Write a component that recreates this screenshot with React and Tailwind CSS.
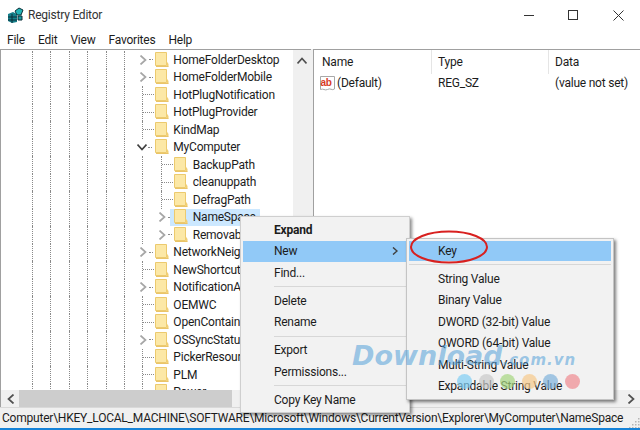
import React from "react";

const FONT = "[font-family:'Roboto','Noto_Sans',sans-serif]";

const TREE = [
  { name: "HomeFolderDesktop", arrow: true },
  { name: "HomeFolderMobile", arrow: true },
  { name: "HotPlugNotification" },
  { name: "HotPlugProvider" },
  { name: "KindMap" },
  { name: "MyComputer", open: true },
  { name: "BackupPath", level: 2 },
  { name: "cleanuppath", level: 2 },
  { name: "DefragPath", level: 2 },
  { name: "NameSpace", level: 2, arrow: true, selected: true },
  { name: "RemovableDrives", level: 2, arrow: true },
  { name: "NetworkNeighborhood", arrow: true },
  { name: "NewShortcutHandlers" },
  { name: "NotificationArea", arrow: true },
  { name: "OEMWC" },
  { name: "OpenContainers" },
  { name: "OSSyncStatus", arrow: true },
  { name: "PickerResources" },
  { name: "PLM" },
  { name: "Power" },
];

const MENU = [
  { label: "Expand", bold: true },
  { label: "New", active: true, sub: true },
  { label: "Find..." },
  null,
  { label: "Delete" },
  { label: "Rename" },
  null,
  { label: "Export" },
  { label: "Permissions..." },
  null,
  { label: "Copy Key Name" },
];

const SUBMENU = ["String Value", "Binary Value", "DWORD (32-bit) Value", "QWORD (64-bit) Value", "Multi-String Value", "Expandable String Value"];

const DOTS = ["bg-[#7fcdf3]", "bg-[#c9c9c9]", "bg-[#a5d67f]", "bg-[#f6c98a]", "bg-[#7fb2dc]", "bg-[#f08a90]"];

const Chevron = ({ dir = "right", color = "#a6a6a6", size = 10 }) => {
  const points = {
    right: "2.5,0.5 7.5,5 2.5,9.5",
    left: "7.5,0.5 2.5,5 7.5,9.5",
    up: "0.5,7.5 5,2.5 9.5,7.5",
    down: "0.5,2.5 5,7.5 9.5,2.5",
  }[dir];
  return (
    <svg width={size} height={size} viewBox="0 0 10 10" className="shrink-0">
      <polyline points={points} fill="none" stroke={color} strokeWidth="1.7" />
    </svg>
  );
};

const Folder = () => (
  <svg width="14" height="16" viewBox="0 0 14 16" className="shrink-0">
    <path d="M0.5 0.5H11.5V13.5H0.5Z" fill="#fce8a6" stroke="#ecca6e" />
    <path d="M11.5 9V14.5H13.5V12Z" fill="#f2cf74" />
    <path d="M1 14.5H13.5" stroke="#eac468" />
  </svg>
);

const RegIcon = () => (
  <svg width="17" height="17" viewBox="0 0 17 17" className="shrink-0">
    <path d="M1 7L6 5L10 7V15L5 16L1 14Z" fill="#157f8a" />
    <path d="M1 10L10 10M5 7V16M1 13L10 13" stroke="#0b2f38" strokeWidth="1" />
    <path d="M8 4L12 1L16 3L14 8L10 8Z" fill="#23b3b5" stroke="#0b2f38" />
    <path d="M11 9H15V13H11Z" fill="#1b9aa0" stroke="#0b2f38" />
  </svg>
);

const StringIcon = () => (
  <svg width="16" height="17" viewBox="0 0 16 17" className="shrink-0">
    <path d="M0.5 1.5H14.5V14C12 16 10 12.5 7.5 14.5C5 16 3 13 0.5 14.5Z" fill="#fff" stroke="#a8a8a8" />
    <text x="0.5" y="10.5" fontSize="10" fontWeight="700" fill="#d8391f" fontFamily="'Liberation Sans', sans-serif">ab</text>
  </svg>
);

const Grip = () => (
  <svg width="11" height="11" viewBox="0 0 11 11" className="shrink-0">
    <path d="M9 1h1.5v1.5H9zM6 4h1.5v1.5H6zM9 4h1.5v1.5H9zM3 7h1.5v1.5H3zM6 7h1.5v1.5H6zM9 7h1.5v1.5H9zM0 10h1.5v1H0zM3 10h1.5v1H3zM6 10h1.5v1H6zM9 10h1.5v1H9z" fill="#b5b5b5" />
  </svg>
);

const Guide = () => <span className="w-[18.4px] h-full shrink-0 border-l border-dotted border-[#8a8a8a]" />;

const TreeRow = ({ name, level = 1, arrow, open, selected }) => (
  <div className="h-[17.5px] shrink-0 flex items-center pl-[32px]">
    {[0, 1, 2, 3, 4, 5].map((i) => <Guide key={i} />)}
    {level === 2 && <Guide />}
    <span className={`h-full shrink-0 w-[13px] flex items-center ${arrow || open ? "" : "border-l border-dotted border-[#8a8a8a]"}`}>
      {open ? (
        <span className="-ml-[5px]"><Chevron dir="down" color="#404040" /></span>
      ) : arrow ? (
        <span className="-ml-[4px]"><Chevron /></span>
      ) : null}
      <span className={`border-t border-dotted border-[#8a8a8a] ${arrow || open ? "w-[4px] ml-[1px]" : "w-[11px]"}`} />
    </span>
    <span className={`h-full flex items-center ${selected ? "bg-[#cce8ff] -ml-[4px] pl-[4px] pr-[4px]" : ""}`}>
      <Folder />
      <span className={`${level === 2 ? "ml-[5px]" : "ml-[4px]"} whitespace-nowrap`}>{name}</span>
    </span>
  </div>
);

const MenuRow = ({ label, bold, active, sub }) => (
  <div className={`h-[21.5px] flex items-center justify-between pl-[31px] pr-[8px] ${active ? "bg-[#91c9f7]" : ""} ${bold ? "font-bold" : ""}`}>
    <span>{label}</span>
    {sub && <Chevron color="#404040" size={8} />}
  </div>
);

const Sep = () => (
  <div className="h-[6.5px] flex items-center pl-[31px]">
    <div className="h-px flex-1 bg-[#d7d7d7]" />
  </div>
);

export default function App() {
  return (
    <div className={`relative w-[640px] h-[430px] overflow-hidden bg-white text-[12px] leading-none tracking-[-0.22px] text-[#1c1c1c] flex flex-col ${FONT}`}>
      <div className="h-[30px] shrink-0 flex items-center pl-[7px]">
        <RegIcon />
        <span className="ml-[4px] text-[#333]">Registry Editor</span>
        <div className="ml-auto flex items-center">
          <span className="w-[10px] h-px bg-[#333] mr-[34px]" />
          <span className="w-[10px] h-[10px] border border-[#333] mr-[35px]" />
          <svg width="11" height="11" viewBox="0 0 11 11" className="mr-[16px]">
            <path d="M0.5 0.5L10.5 10.5M10.5 0.5L0.5 10.5" stroke="#333" />
          </svg>
        </div>
      </div>

      <div className="h-[19px] shrink-0 flex items-center gap-[13px] pl-[7px]">
        <span>File</span>
        <span>Edit</span>
        <span>View</span>
        <span>Favorites</span>
        <span>Help</span>
      </div>

      <div className="h-[358px] shrink-0 flex bg-[#f0f0f0]">
        <div className="w-[311px] shrink-0 flex flex-col bg-white border-l border-t border-[#a0a0a0]">
          <div className="flex-1 flex min-h-0">
            <div className="flex-1 pt-[1px] overflow-hidden flex flex-col -ml-px">
              {TREE.map((row) => <TreeRow key={row.name} {...row} />)}
            </div>
            <div className="w-[18px] shrink-0 bg-[#f0f0f0] flex justify-center pt-[6px]">
              <Chevron dir="up" color="#505050" />
            </div>
          </div>
          <div className="h-[17px] shrink-0 bg-[#f0f0f0] flex items-center pl-[5px]">
            <Chevron dir="left" color="#505050" />
            <div className="ml-[3px] w-[213px] h-full bg-[#cdcdcd]" />
          </div>
        </div>

        <div className="flex-1 ml-[2px] flex flex-col bg-white border-l border-t border-[#a0a0a0]">
          <div className="flex-1">
            <div className="h-[24px] flex items-center">
              <span className="w-[118px] pl-[8px] h-full flex items-center border-r border-[#e5e5e5]">Name</span>
              <span className="w-[117px] pl-[6px] h-full flex items-center border-r border-[#e5e5e5]">Type</span>
              <span className="pl-[6px]">Data</span>
            </div>
            <div className="h-[18px] flex items-center">
              <span className="w-[118px] pl-[6px] flex items-center gap-[1px]"><StringIcon />(Default)</span>
              <span className="w-[117px] pl-[6px]">REG_SZ</span>
              <span className="pl-[6px]">(value not set)</span>
            </div>
          </div>
          <div className="h-[17px] shrink-0 bg-[#f0f0f0] flex items-center justify-end pr-[4px]">
            <Chevron color="#505050" />
          </div>
        </div>
      </div>

      <div className="flex-1 bg-[#f0f0f0] border-t border-[#d9d9d9] flex items-center justify-between pl-[2px] whitespace-nowrap">
        <span>Computer\HKEY_LOCAL_MACHINE\SOFTWARE\Microsoft\Windows\CurrentVersion\Explorer\MyComputer\NameSpace</span>
        <span className="self-end"><Grip /></span>
      </div>
      <div className="h-[2px] shrink-0 bg-[#1683d8]" />

      {/* context menu */}
      <div className="absolute left-[240px] top-[216px] w-[170px] h-[197px] bg-[#f2f2f2] border border-[#cfcfcf] shadow-[2px_2px_3px_rgba(0,0,0,0.45)] pt-[2px] px-[2px]">
        {MENU.map((item, i) => (item ? <MenuRow key={item.label} {...item} /> : <Sep key={i} />))}
      </div>

      <div className="absolute left-[406px] top-[238px] w-[208px] h-[162px] bg-[#f2f2f2] border border-[#c4c4c4] shadow-[2px_2px_3px_rgba(0,0,0,0.5)] p-[2px]">
        <div className="h-[20px] flex items-center pl-[29px] bg-[#91c9f7]">Key</div>
        <div className="h-[7px] flex items-center"><div className="h-px flex-1 bg-[#d7d7d7]" /></div>
        {SUBMENU.map((label) => (
          <div key={label} className="h-[21.5px] flex items-center pl-[29px]">{label}</div>
        ))}
      </div>

      {/* red marker round Key */}
      <svg width="80" height="36" viewBox="0 0 80 36" className="absolute left-[409px] top-[229px]">
        <ellipse cx="40" cy="18" rx="38" ry="15.5" fill="none" stroke="#d8201f" strokeWidth="2" />
      </svg>

      {/* watermark */}
      <div className="absolute left-[352px] top-[340px] flex items-baseline italic font-bold tracking-normal text-[#4f9fd8]/55 [font-family:'DejaVu_Sans',sans-serif] pointer-events-none">
        <span className="text-[27px] leading-[32px]">Download</span>
        <span className="text-[15px] tracking-[1px]">.com.vn</span>
      </div>
      <div className="absolute left-[457px] top-[374px] flex gap-[6.5px] pointer-events-none">
        {DOTS.map((c) => <span key={c} className={`w-[15px] h-[15px] rounded-full opacity-70 ${c}`} />)}
      </div>
    </div>
  );
}
